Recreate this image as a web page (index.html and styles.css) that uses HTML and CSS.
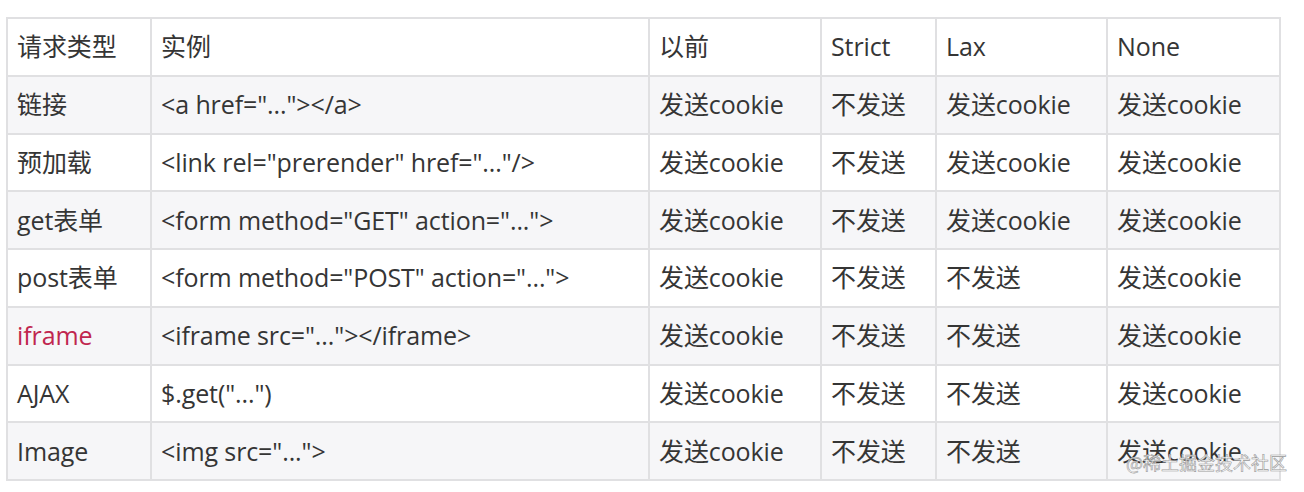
FILE: index.html
```html
<!DOCTYPE html>
<html lang="zh">
<head>
<meta charset="utf-8">
<link rel="stylesheet" href="styles.css">
</head>
<body>
<div class="page">
<table class="grid">
<colgroup>
<col class="c1"><col class="c2"><col class="c3"><col class="c4"><col class="c5"><col class="c6">
</colgroup>
<thead>
<tr><th>请求类型</th><th>实例</th><th>以前</th><th>Strict</th><th>Lax</th><th>None</th></tr>
</thead>
<tbody>
<tr class="alt"><td>链接</td><td>&lt;a href="..."&gt;&lt;/a&gt;</td><td>发送cookie</td><td>不发送</td><td>发送cookie</td><td>发送cookie</td></tr>
<tr><td>预加载</td><td>&lt;link rel="prerender" href="..."/&gt;</td><td>发送cookie</td><td>不发送</td><td>发送cookie</td><td>发送cookie</td></tr>
<tr class="alt"><td>get表单</td><td>&lt;form method="GET" action="..."&gt;</td><td>发送cookie</td><td>不发送</td><td>发送cookie</td><td>发送cookie</td></tr>
<tr><td>post表单</td><td>&lt;form method="POST" action="..."&gt;</td><td>发送cookie</td><td>不发送</td><td>不发送</td><td>发送cookie</td></tr>
<tr class="alt"><td><span class="code">iframe</span></td><td>&lt;iframe src="..."&gt;&lt;/iframe&gt;</td><td>发送cookie</td><td>不发送</td><td>不发送</td><td>发送cookie</td></tr>
<tr><td>AJAX</td><td>$.get("...")</td><td>发送cookie</td><td>不发送</td><td>不发送</td><td>发送cookie</td></tr>
<tr class="alt"><td>Image</td><td>&lt;img src="..."&gt;</td><td>发送cookie</td><td>不发送</td><td>不发送</td><td>发送cookie</td></tr>
</tbody>
</table>
<div class="watermark">@稀土掘金技术社区</div>
</div>
</body>
</html>
```

FILE: styles.css
```css
html, body {
  margin: 0;
  padding: 0;
  background: #ffffff;
}
.page {
  position: relative;
  width: 1304px;
  height: 492px;
  padding: 17px 0 0 6px;
  box-sizing: border-box;
  font-family: "Open Sans", "Noto Sans CJK SC", sans-serif;
  color: #353535;
}
.grid {
  border-collapse: collapse;
  table-layout: fixed;
  width: 1273px;
}
.c1 { width: 144px; }
.c2 { width: 498px; }
.c3 { width: 172px; }
.c4 { width: 115px; }
.c5 { width: 171px; }
.c6 { width: 173px; }
.grid th, .grid td {
  border: 2px solid #e0e0e2;
  height: 57.75px;
  box-sizing: border-box;
  padding: 0 9px;
  font-size: 25px;
  font-weight: 400;
  text-align: left;
  vertical-align: middle;
  white-space: nowrap;
  line-height: 1;
  letter-spacing: -0.1px;
}
.grid thead tr { background: #ffffff; }
.grid tbody tr { background: #ffffff; }
.grid tbody tr.alt { background: #f6f6f8; }
.code { color: #c0264f; }
.watermark {
  position: absolute;
  right: 17px;
  bottom: 17px;
  font-family: "Noto Sans CJK SC", sans-serif;
  font-size: 18px;
  color: rgba(255,255,255,0.85);
  -webkit-text-stroke: 0.6px #9a9a9a;
}
```
